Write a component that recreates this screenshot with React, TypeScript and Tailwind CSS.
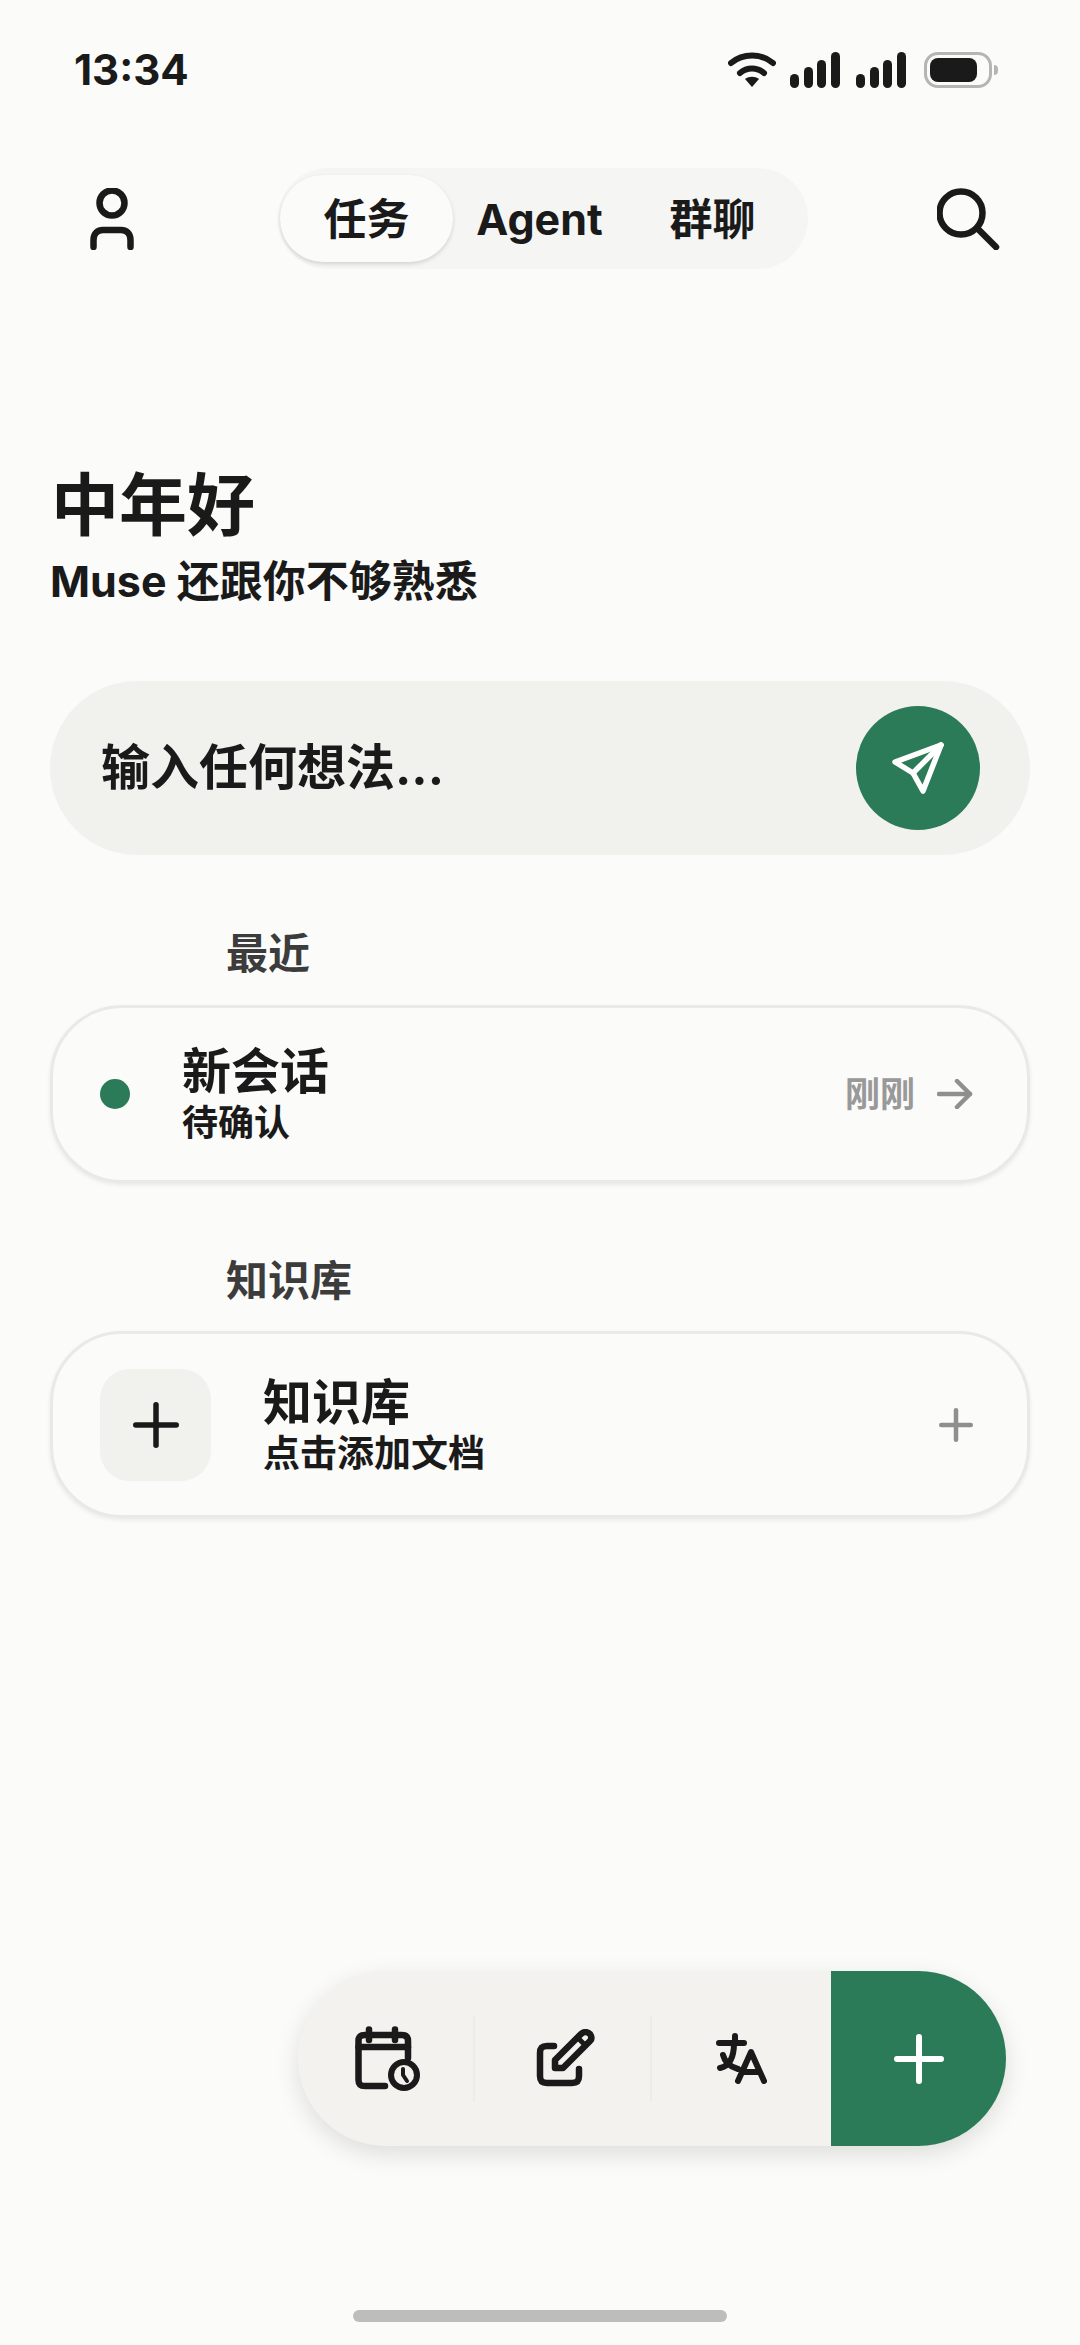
const cjk = "font-['Inter','Noto_Sans_CJK_SC',sans-serif]";

function Signal() {
  return (
    <svg width="50" height="36" viewBox="0 0 50 36" fill="#1a1a1a">
      <rect x="0" y="22" width="9" height="14" rx="4.5" />
      <rect x="14" y="15" width="9" height="21" rx="4.5" />
      <rect x="27" y="8" width="9" height="28" rx="4.5" />
      <rect x="41" y="0" width="9" height="36" rx="4.5" />
    </svg>
  );
}

function StatusIcons() {
  return (
    <div className="flex items-center">
      <svg width="48" height="36" viewBox="0 0 48 36" fill="none" stroke="#1a1a1a" strokeWidth="6" strokeLinecap="round">
        <path d="M3 11 C15 1 33 1 45 11" />
        <path d="M12 21 C19 15 29 15 36 21" />
        <path d="M17 27 L24 35 L31 27 C27 24 21 24 17 27Z" fill="#1a1a1a" stroke="none" />
      </svg>
      <div className="ml-[14px]"><Signal /></div>
      <div className="ml-[16px]"><Signal /></div>
      <div className="ml-[18px] w-[68px] h-[36px] rounded-[14px] border-[3px] border-[#b5b5b3] p-[3px]">
        <div className="w-[47px] h-full rounded-[8px] bg-[#1a1a1a]" />
      </div>
      <div className="ml-[2px] w-[4px] h-[10px] rounded-r-full bg-[#b5b5b3]" />
    </div>
  );
}

function UserIcon() {
  return (
    <svg width="44" height="62" viewBox="0 0 44 62" fill="none" stroke="#1a1a1a" strokeWidth="6.5" strokeLinecap="round">
      <circle cx="22" cy="15" r="12.5" />
      <path d="M3.500 59 V52 C3.500 45 8 42 13 42 H31 C36 42 40.500 45 40.500 52 V59" />
    </svg>
  );
}

function SearchIcon() {
  return (
    <svg width="63" height="62" viewBox="0 0 63 62" fill="none" stroke="#1a1a1a" strokeWidth="6.5" strokeLinecap="round">
      <circle cx="24" cy="25" r="21.5" />
      <path d="M41 41 L59 59" />
    </svg>
  );
}

function SendIcon() {
  return (
    <svg width="54" height="54" viewBox="0 0 54 54" fill="none" stroke="#fff" strokeWidth="5.5" strokeLinejoin="round" strokeLinecap="round">
      <path d="M50 4 L4 21 L22 32 L32 50 Z" />
      <path d="M22 32 L50 4" />
    </svg>
  );
}

function CalendarIcon() {
  return (
    <svg width="66" height="66" viewBox="0 0 66 66" fill="none" stroke="#1a1a1a" strokeWidth="6.5" strokeLinecap="round" strokeLinejoin="round">
      <path d="M30 60 H10 C5.500 60 3.500 58 3.500 54 V15 C3.500 11 5.500 9 10 9 H47 C51 9 53 11 53 15 V32" />
      <path d="M3.500 21 H53" />
      <path d="M14 3.500 V14" />
      <path d="M40 3.500 V14" />
      <circle cx="49" cy="49" r="16" fill="#1a1a1a" stroke="none" />
      <circle cx="49" cy="49" r="10" fill="#f4f2ee" stroke="none" />
      <path d="M48 43 V49 L52 55" strokeWidth="4" />
    </svg>
  );
}

function EditIcon() {
  return (
    <svg width="60" height="60" viewBox="0 0 60 60" fill="none" stroke="#1a1a1a" strokeWidth="6.5" strokeLinecap="round" strokeLinejoin="round">
      <path d="M19 17 H12 C7 17 5 19 5 24 V47 C5 52 7 54 12 54 H37 C42 54 44 52 44 47 V40" />
      <path d="M20 31 L46 5 C49 2 53 3 55 5 C57 8 57 10 55 12 L28 39 L20 39 Z" />
      <path d="M43 9 L50 16" strokeWidth="5" />
    </svg>
  );
}

function TranslateIcon() {
  return (
    <svg width="52" height="52" viewBox="0 0 52 52" fill="none" stroke="#1a1a1a" strokeWidth="6" strokeLinecap="round" strokeLinejoin="round">
      <path d="M3 10 H28" />
      <path d="M19 3 V10" />
      <path d="M18 10 C18 23 14 33 4 35" />
      <path d="M7 22 C9 30 15 34 22 36" />
      <path d="M22 48 L35 19 L48 48" />
      <path d="M28 39 H42" />
    </svg>
  );
}

function Plus({ size, stroke, width }: { size: number; stroke: string; width: number }) {
  return (
    <svg width={size} height={size} viewBox={`0 0 ${size} ${size}`} fill="none" stroke={stroke} strokeWidth={width} strokeLinecap="round">
      <path d={`M${size / 2} ${width / 2} V${size - width / 2}`} />
      <path d={`M${width / 2} ${size / 2} H${size - width / 2}`} />
    </svg>
  );
}

function SectionLabel({ children, className }: { children: string; className: string }) {
  return <h2 className={`pl-[176px] text-[42px] leading-[52px] font-bold text-[#3c3c3c] ${className}`}>{children}</h2>;
}

export default function App() {
  return (
    <div className={`relative w-[1080px] h-[2345px] overflow-hidden bg-[#fbfbf9] text-[#1a1a1a] ${cjk}`}>
      <div className="flex h-[140px] items-center justify-between pl-[74px] pr-[82px]">
        <span className="text-[42px] leading-none font-bold">13:34</span>
        <StatusIcons />
      </div>

      <div className="mt-[28px] flex h-[101px] items-center pl-[90px] pr-[80px]">
        <UserIcon />
        <div className="ml-[144px] flex h-[101px] w-[530px] items-center rounded-full bg-[#f5f5f3] pl-[2px] text-[43px] font-bold">
          <div className="flex h-[87px] w-[173px] items-center justify-center rounded-full bg-[#fbfbf9] pt-[2px] shadow-[0_2px_4px_rgba(0,0,0,0.14)]">任务</div>
          <div className="flex w-[173px] justify-center pt-[2px]">Agent</div>
          <div className="flex w-[173px] justify-center pt-[2px]">群聊</div>
        </div>
        <div className="ml-auto"><SearchIcon /></div>
      </div>

      <div className="px-[50px]">
        <h1 className="mt-[196px] pl-[1px] text-[68px] leading-[80px] font-bold">中年好</h1>
        <p className="mt-[10px] text-[43px] leading-[52px] font-bold">Muse 还跟你不够熟悉</p>

        <div className="mt-[74px] flex h-[174px] items-center justify-between rounded-full bg-[#f1f1ee] pl-[51px] pr-[50px]">
          <span className="text-[49px] font-bold">输入任何想法...</span>
          <div className="flex h-[124px] w-[124px] items-center justify-center rounded-full bg-[#2b7b58]"><SendIcon /></div>
        </div>

        <SectionLabel className="mt-[73px]">最近</SectionLabel>
        <div className="mt-[25px] flex h-[178px] items-center rounded-[72px] border-[3px] border-[#e9e9e7] pl-[47px] pr-[54px] shadow-[0_2px_4px_rgba(0,0,0,0.08)]">
          <div className="h-[30px] w-[30px] rounded-full bg-[#2b7b58]" />
          <div className="ml-[52px]">
            <div className="text-[49px] leading-[58px] font-bold">新会话</div>
            <div className="text-[36px] leading-[44px] font-bold">待确认</div>
          </div>
          <span className="ml-auto text-[35px] font-bold text-[#999999]">刚刚</span>
          <svg className="ml-[22px]" width="36" height="30" viewBox="0 0 36 30" fill="none" stroke="#8f8f8f" strokeWidth="4.5" strokeLinecap="round" strokeLinejoin="round">
            <path d="M2 15 H33" />
            <path d="M20 2 L33 15 L20 28" />
          </svg>
        </div>

        <SectionLabel className="mt-[72px]">知识库</SectionLabel>
        <div className="mt-[24px] flex h-[187px] items-center rounded-[72px] border-[3px] border-[#e9e9e7] pl-[47px] pr-[54px] shadow-[0_2px_4px_rgba(0,0,0,0.08)]">
          <div className="flex h-[112px] w-[111px] items-center justify-center rounded-[30px] bg-[#f1f1ee]"><Plus size={46} stroke="#1a1a1a" width={5.5} /></div>
          <div className="ml-[52px]">
            <div className="text-[49px] leading-[58px] font-bold">知识库</div>
            <div className="text-[37px] leading-[44px] font-bold">点击添加文档</div>
          </div>
          <div className="ml-auto"><Plus size={34} stroke="#8f8f8f" width={4.5} /></div>
        </div>
      </div>

      <div className="absolute left-[298px] top-[1971px] flex h-[175px] w-[708px] overflow-hidden rounded-full bg-[#f4f2ee] shadow-[0_8px_24px_rgba(0,0,0,0.12)]">
        <div className="flex w-[175px] items-center justify-center pl-[5px]"><CalendarIcon /></div>
        <div className="my-[44px] w-[2px] bg-[#eeece8]" />
        <div className="flex w-[175px] items-center justify-center pl-[5px]"><EditIcon /></div>
        <div className="my-[44px] w-[2px] bg-[#eeece8]" />
        <div className="flex flex-1 items-center justify-center"><TranslateIcon /></div>
        <div className="flex w-[175px] items-center justify-center bg-[#2b7b58]"><Plus size={50} stroke="#ffffff" width={6} /></div>
      </div>

      <div className="absolute left-[353px] top-[2310px] h-[12px] w-[374px] rounded-full bg-[#bdbdbd]" />
    </div>
  );
}
